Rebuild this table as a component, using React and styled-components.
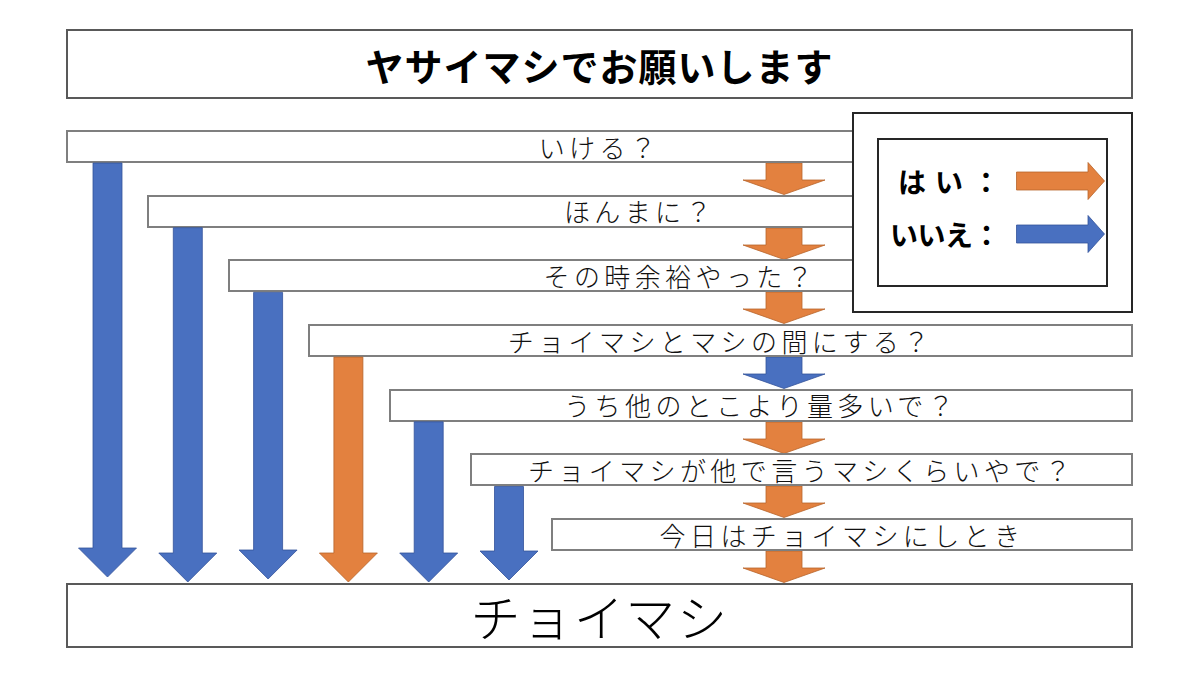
import { Fragment } from 'react';
import styled, { createGlobalStyle } from 'styled-components';

const ORANGE = '#E3813F';
const ORANGE_EDGE = '#B8642B';
const BLUE = '#4970C0';
const BLUE_EDGE = '#34539A';

const STEP_X = 80.83;
const STEP_Y = 64.7;
const ROW_H = 33;
const FIRST_TOP = 130;
const FIRST_LEFT = 66;

// yes = the answer leads on to the next question, no = straight down to the result
const questions = [
  { text: 'いける？', next: 'yes', skip: BLUE },
  { text: 'ほんまに？', next: 'yes', skip: BLUE },
  { text: 'その時余裕やった？', next: 'yes', skip: BLUE },
  { text: 'チョイマシとマシの間にする？', next: 'no', skip: ORANGE },
  { text: 'うち他のとこより量多いで？', next: 'yes', skip: BLUE },
  { text: 'チョイマシが他で言うマシくらいやで？', next: 'yes', skip: BLUE },
  { text: '今日はチョイマシにしとき', next: 'yes' },
];

export default function App() {
  return (
    <Page>
      <GlobalStyle />
      <Title>ヤサイマシでお願いします</Title>

      <Chart>
        {questions.map((q, i) => (
          <Fragment key={q.text}>
            <Question $step={i}>{q.text}</Question>
            <Connector $yes={q.next === 'yes'} />
          </Fragment>
        ))}
        <Result>チョイマシ</Result>
      </Chart>

      <SkipArrows />

      <Legend>
        <LegendInner>
          <LegendLabel $spaced>はい：</LegendLabel>
          <RightArrow fill={ORANGE} edge={ORANGE_EDGE} />
          <LegendLabel>いいえ：</LegendLabel>
          <RightArrow fill={BLUE} edge={BLUE_EDGE} />
        </LegendInner>
      </Legend>
    </Page>
  );
}

function Connector({ $yes }) {
  const fill = $yes ? ORANGE : BLUE;
  const edge = $yes ? ORANGE_EDGE : BLUE_EDGE;
  return (
    <ConnectorWrap>
      <svg width="84" height="32" viewBox="0 0 84 32">
        <path
          d="M24 0 H60 V17 H83 L42 31.5 L1 17 H24 Z"
          fill={fill}
          stroke={edge}
          strokeWidth="0.8"
        />
      </svg>
    </ConnectorWrap>
  );
}

function SkipArrows() {
  const tips = [577, 582, 579, 582, 582, 580];
  return (
    <Overlay width="1200" height="675" viewBox="0 0 1200 675">
      {questions
        .filter((q) => q.skip)
        .map((q, i) => {
          const cx = FIRST_LEFT + 41.5 + i * 80.3;
          const top = FIRST_TOP + i * STEP_Y + ROW_H;
          const tip = tips[i];
          const headTop = tip - 29;
          const edge = q.skip === ORANGE ? ORANGE_EDGE : BLUE_EDGE;
          return (
            <path
              key={q.text}
              d={`M${cx - 14.5} ${top} H${cx + 14.5} V${headTop} H${cx + 29} L${cx} ${tip} L${cx - 29} ${headTop} H${cx - 14.5} Z`}
              fill={q.skip}
              stroke={edge}
              strokeWidth="0.8"
            />
          );
        })}
    </Overlay>
  );
}

function RightArrow({ fill, edge }) {
  return (
    <svg width="89" height="38" viewBox="0 0 89 38">
      <path
        d="M0.5 10 H72 V0.5 L88.5 19 L72 37.5 V28 H0.5 Z"
        fill={fill}
        stroke={edge}
        strokeWidth="0.8"
      />
    </svg>
  );
}

const GlobalStyle = createGlobalStyle`
  body {
    margin: 0;
    background: #ffffff;
    font-family: "Noto Sans CJK JP", "Noto Sans", sans-serif;
  }
`;

const Page = styled.div`
  position: relative;
  width: 1200px;
  height: 675px;
  overflow: hidden;
  background: #ffffff;
  padding-top: 29px;
  box-sizing: border-box;
`;

const Title = styled.h1`
  box-sizing: border-box;
  margin: 0 67px 0 66px;
  height: 70px;
  border: 2.5px solid #595959;
  display: flex;
  align-items: center;
  justify-content: center;
  font-size: 38px;
  font-weight: 700;
  letter-spacing: 1px;
  color: #000000;
  padding-top: 1px;
`;

const Chart = styled.div`
  display: flex;
  flex-direction: column;
  padding-top: 31px;
`;

const Question = styled.div`
  box-sizing: border-box;
  height: ${ROW_H}px;
  margin: 0 67px 0 ${(p) => FIRST_LEFT + p.$step * STEP_X}px;
  border: 2px solid #7f7f7f;
  background: #ffffff;
  display: flex;
  align-items: center;
  justify-content: center;
  font-size: 26px;
  font-weight: 300;
  letter-spacing: 4.4px;
  line-height: 1;
  color: #111111;
  white-space: nowrap;
`;

const ConnectorWrap = styled.div`
  height: ${STEP_Y - ROW_H}px;
  margin-left: 742px;
  line-height: 0;

  svg {
    display: block;
  }
`;

const Result = styled.div`
  box-sizing: border-box;
  height: 65px;
  margin: 0 67px 0 66px;
  border: 2.5px solid #595959;
  display: flex;
  align-items: center;
  justify-content: center;
  font-size: 50px;
  font-weight: 300;
  letter-spacing: 1.6px;
  color: #000000;
`;

const Overlay = styled.svg`
  position: absolute;
  inset: 0;
  pointer-events: none;
`;

const Legend = styled.div`
  position: absolute;
  left: 852px;
  top: 112px;
  width: 281px;
  height: 201px;
  box-sizing: border-box;
  padding: 24px 23px;
  border: 2px solid #262626;
  background: #ffffff;
`;

const LegendInner = styled.div`
  box-sizing: border-box;
  height: 100%;
  border: 2px solid #262626;
  display: grid;
  grid-template-columns: 121px 89px;
  grid-auto-rows: 40px;
  column-gap: 16px;
  row-gap: 13px;
  align-content: start;
  align-items: center;
  padding-top: 21px;
`;

const LegendLabel = styled.span`
  justify-self: end;
  font-size: 28px;
  font-weight: 700;
  color: #000000;
  white-space: nowrap;
  letter-spacing: ${(p) => (p.$spaced ? '9px' : '-0.5px')};
  margin-right: ${(p) => (p.$spaced ? '-9px' : '0')};
`;
